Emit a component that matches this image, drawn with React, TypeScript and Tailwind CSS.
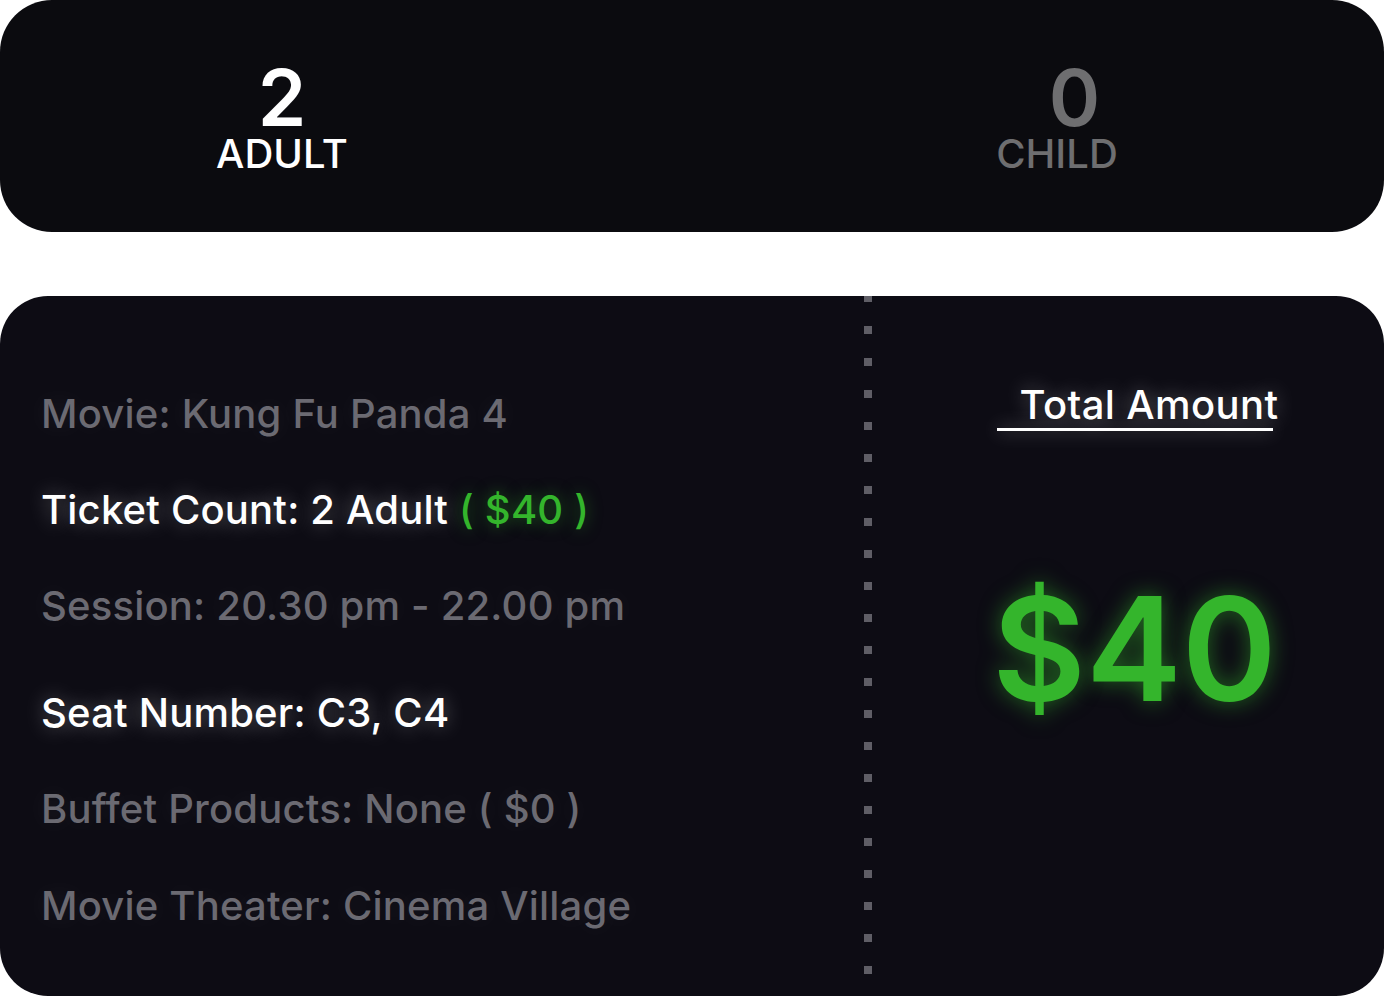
import React from 'react';

const dots = Array.from({ length: 22 });

const Line = ({ children, dim, className = '' }: { children: React.ReactNode; dim?: boolean; className?: string }) => (
  <p
    className={
      'text-[40px] font-medium leading-none tracking-[0.2px] ' +
      (dim
        ? 'text-[#6b6a72] [text-shadow:0_0_24px_rgba(255,255,255,0.08)] '
        : 'text-white [text-shadow:0_0_20px_rgba(255,255,255,0.35)] ') +
      className
    }
  >
    {children}
  </p>
);

const App = () => {
  return (
    <div className="w-[1384px] h-[996px] bg-white flex flex-col font-['Inter',sans-serif]">
      <div className="h-[232px] rounded-[52px] bg-[#0b0b0f] flex items-start justify-between pt-[64px] pl-[218px] pr-[268px]">
        <div className="flex flex-col items-center w-[128px]">
          <span className="text-[78px] font-semibold leading-[68px] text-white">2</span>
          <span className="mt-[2px] text-[40px] font-medium leading-none text-white">ADULT</span>
        </div>
        <div className="flex flex-col items-center w-[118px]">
          <span className="text-[78px] font-semibold leading-[68px] text-[#6e6e70] ml-[35px]">0</span>
          <span className="mt-[2px] text-[40px] font-medium leading-none text-[#6e6e70]">CHILD</span>
        </div>
      </div>

      <div className="mt-[64px] flex-1 rounded-[48px] bg-[#0d0c14] flex overflow-hidden">
        <div className="w-[864px] shrink-0 pl-[41px] pt-[98px] flex flex-col">
          <Line dim>Movie: Kung Fu Panda 4</Line>
          <Line className="mt-[56px]">
            Ticket Count: 2 Adult{' '}
            <span className="text-[#34b52c] [text-shadow:0_0_16px_rgba(52,181,44,0.5)]">( $40 )</span>
          </Line>
          <Line dim className="mt-[56px]">Session: 20.30 pm - 22.00 pm</Line>
          <Line className="mt-[67px]">Seat Number: C3, C4</Line>
          <Line dim className="mt-[56px]">Buffet Products: None ( $0 )</Line>
          <Line dim className="mt-[57px]">Movie Theater: Cinema Village</Line>
        </div>

        <div className="w-[8px] shrink-0 flex flex-col gap-[24px] -mt-[2px]">
          {dots.map((_, i) => (
            <div key={i} className="w-[8px] h-[8px] shrink-0 bg-[#5f5e66]" />
          ))}
        </div>

        <div className="flex-1 flex flex-col items-center pt-[87px] pl-[13px]">
          <div className="flex flex-col items-end ml-[6px]">
            <span className="text-[40px] font-medium leading-[44px] tracking-[0.4px] text-white [text-shadow:0_0_20px_rgba(255,255,255,0.35)]">
              Total Amount
            </span>
            <div className="mt-[1px] w-[276px] h-[3px] bg-white mr-[6px] shadow-[0_0_18px_rgba(255,255,255,0.45)]" />
          </div>
          <span className="mt-[146px] text-[144px] font-semibold leading-none text-[#34b52c] [text-shadow:0_0_22px_rgba(52,181,44,0.55)]">
            $40
          </span>
        </div>
      </div>
    </div>
  );
};

export default App;
